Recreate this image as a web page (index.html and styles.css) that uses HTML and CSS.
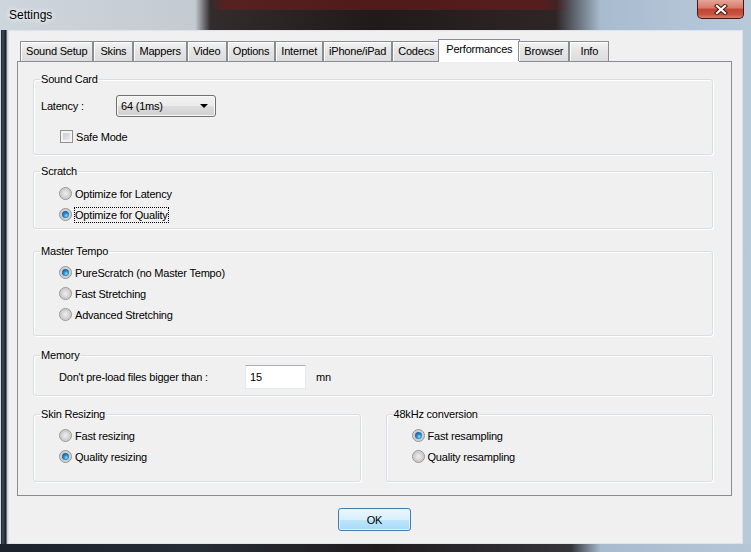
FILE: index.html
```html
<!DOCTYPE html>
<html lang="en">
<head>
    <meta charset="UTF-8">
    <title>Settings</title>
    <link rel="stylesheet" href="styles.css">
</head>
<body>
    <div class="window">
        <div class="titlebar">
            <div class="title">Settings</div>
            <div class="close">
                <svg width="14" height="11" viewBox="0 0 14 11">
                    <path d="M3 2 L11 9 M11 2 L3 9" stroke="#4b1710" stroke-width="4.2" stroke-linecap="square"/>
                    <path d="M3 2 L11 9 M11 2 L3 9" stroke="#fff" stroke-width="2.2" stroke-linecap="square"/>
                </svg>
            </div>
        </div>

        <div class="client">
            <div class="tabs">
                <div class="tab">Sound Setup</div>
                <div class="tab">Skins</div>
                <div class="tab">Mappers</div>
                <div class="tab">Video</div>
                <div class="tab">Options</div>
                <div class="tab">Internet</div>
                <div class="tab">iPhone/iPad</div>
                <div class="tab">Codecs</div>
                <div class="tab active">Performances</div>
                <div class="tab">Browser</div>
                <div class="tab">Info</div>
            </div>

            <div class="panel">
                <fieldset class="group sound-card">
                    <legend>Sound Card</legend>
                    <div class="latency-row">
                        <span class="latency-label">Latency :</span>
                        <div class="select">
                            <span>64 (1ms)</span>
                            <span class="arrow"></span>
                        </div>
                    </div>
                    <div class="check-row">
                        <span class="check"></span>
                        <span>Safe Mode</span>
                    </div>
                </fieldset>

                <fieldset class="group scratch">
                    <legend>Scratch</legend>
                    <div class="options">
                        <div class="option"><span class="radio"></span><span>Optimize for Latency</span></div>
                        <div class="option"><span class="radio on"></span><span class="focus">Optimize for Quality</span></div>
                    </div>
                </fieldset>

                <fieldset class="group tempo">
                    <legend>Master Tempo</legend>
                    <div class="options">
                        <div class="option"><span class="radio on"></span><span>PureScratch (no Master Tempo)</span></div>
                        <div class="option"><span class="radio"></span><span>Fast Stretching</span></div>
                        <div class="option"><span class="radio"></span><span>Advanced Stretching</span></div>
                    </div>
                </fieldset>

                <fieldset class="group memory">
                    <legend>Memory</legend>
                    <div class="memory-row">
                        <span class="memory-label">Don't pre-load files bigger than :</span>
                        <div class="field">15</div>
                        <span class="unit">mn</span>
                    </div>
                </fieldset>

                <div class="split">
                    <fieldset class="group half">
                        <legend>Skin Resizing</legend>
                        <div class="options">
                            <div class="option"><span class="radio"></span><span>Fast resizing</span></div>
                            <div class="option"><span class="radio on"></span><span>Quality resizing</span></div>
                        </div>
                    </fieldset>
                    <fieldset class="group half">
                        <legend>48kHz conversion</legend>
                        <div class="options">
                            <div class="option"><span class="radio on"></span><span>Fast resampling</span></div>
                            <div class="option"><span class="radio"></span><span>Quality resampling</span></div>
                        </div>
                    </fieldset>
                </div>
            </div>

            <div class="footer">
                <div class="button">OK</div>
            </div>
        </div>
    </div>
</body>
</html>
```

FILE: styles.css
```css
body {
    margin: 0;
    font-family: "Liberation Sans", Arial, sans-serif;
    font-size: 11px;
    letter-spacing: -0.2px;
    color: #000;
    overflow: hidden;
}
.window {
    width: 751px;
    height: 552px;
    display: flex;
    flex-direction: column;
    box-sizing: border-box;
    background:
        linear-gradient(to right, #1c222b 0%, #262c35 26%, #201c1e 50%, #34343a 76%, #a8bbce 80%, #b5c6d7 100%) bottom / 100% 8px no-repeat,
        linear-gradient(to right, #cfd6dc 0, #cfd6dc 1px, #1b2430 1px, #3d4b5b 3px, #111820 6px, #c7cfd7 7px, #c7cfd7 8px) 0 30px / 8px 100% no-repeat,
        linear-gradient(to right, #cdd5dd 0%, #c3cad2 26%, #332c2d 28%, #201a1b 50%, #2e2526 74%, #7d8a98 78%, #a9bccf 80%, #b8c9da 100%);
}
.titlebar {
    height: 30px;
    display: flex;
    justify-content: space-between;
    align-items: flex-start;
    background: linear-gradient(to right, transparent 28%, rgba(120, 25, 25, 0.55) 30%, rgba(120, 25, 25, 0.55) 72%, transparent 76%) top / 100% 10px no-repeat;
}
.title {
    padding: 8px 0 0 9px;
    font-size: 12px;
    line-height: 14px;
    letter-spacing: 0;
    text-shadow: 0 0 6px #fff, 0 0 6px #fff;
}
.close {
    width: 47px;
    height: 19px;
    margin-right: 7px;
    box-sizing: border-box;
    border: 1px solid #4a1512;
    border-top: 0;
    border-radius: 0 0 5px 5px;
    background: linear-gradient(#e6a596 0%, #d6796a 45%, #c24535 50%, #c6533f 80%, #d9806a 100%);
    display: flex;
    align-items: center;
    justify-content: center;
}

.client {
    flex: 1;
    margin: 0 8px 8px 8px;
    background: #f0f0f0;
    border: 1px solid #dde3e9;
    display: flex;
    flex-direction: column;
    padding: 8px 10px 0 8px;
}
.tabs {
    display: flex;
    align-items: flex-end;
    height: 23px;
    margin: 0 0 -1px 3px;
    position: relative;
    z-index: 1;
}
.tab {
    min-width: 40px;
    height: 20px;
    line-height: 19px;
    padding: 0 5px;
    margin: 0 0 1px 0;
    box-sizing: border-box;
    text-align: center;
    border: 1px solid #898c95;
    border-bottom: 0;
    background: linear-gradient(#f3f3f3, #e4e4e4 50%, #dcdcdc);
    box-shadow: inset 1px 1px 0 #fff;
    white-space: nowrap;
}
.tab.active {
    height: 23px;
    line-height: 19px;
    margin: 0 -2px 0 -2px;
    padding: 0 7px;
    background: #fff;
    box-shadow: none;
}

.panel {
    flex: 1;
    border: 1px solid #898c95;
    background: #f0f0f0;
    padding: 11px 18px 0 15px;
    display: flex;
    flex-direction: column;
}
.group {
    margin: 0;
    padding: 0 8px 0 6px;
    border: 1px solid #d5dfe5;
    border-radius: 3px;
    box-shadow: inset 1px 1px 0 #fff, 1px 1px 0 #fff;
    box-sizing: border-box;
    min-width: 0;
}
.group legend {
    padding: 0 1px;
    line-height: 13px;
}
.sound-card {
    height: 82px;
}
.scratch {
    height: 64px;
    margin-top: 10px;
}
.tempo {
    height: 91px;
    margin-top: 16px;
}
.memory {
    height: 47px;
    margin-top: 13px;
}
.split {
    display: flex;
    gap: 25px;
    height: 74px;
    margin-top: 12px;
}
.half {
    flex: 1;
}

.latency-row {
    display: flex;
    align-items: center;
    margin-top: 9px;
}
.latency-label {
    width: 75px;
    padding-left: 1px;
}
.select {
    width: 100px;
    height: 22px;
    box-sizing: border-box;
    border: 1px solid #707070;
    border-radius: 3px;
    background: linear-gradient(#f2f2f2 0%, #ebebeb 50%, #dddddd 51%, #cfcfcf 100%);
    box-shadow: inset 0 0 0 1px #f8f8f8;
    display: flex;
    align-items: center;
    justify-content: space-between;
    padding: 0 7px 0 4px;
}
.arrow {
    width: 0;
    height: 0;
    border-left: 4px solid transparent;
    border-right: 4px solid transparent;
    border-top: 4px solid #000;
}
.check-row {
    display: flex;
    align-items: center;
    gap: 3px;
    margin: 13px 0 0 20px;
}
.check {
    width: 13px;
    height: 13px;
    box-sizing: border-box;
    border: 1px solid #8f8f8f;
    background: linear-gradient(135deg, #c3c7cc, #eff0f1);
    box-shadow: inset 0 0 0 2px #f4f4f4;
}

.options {
    padding-top: 5px;
    margin-left: 19px;
}
.tempo .options,
.half .options {
    padding-top: 4px;
}
.option {
    display: flex;
    align-items: center;
    gap: 3px;
    height: 21px;
}
.radio {
    width: 13px;
    height: 13px;
    box-sizing: border-box;
    border-radius: 50%;
    border: 1px solid #939393;
    background: radial-gradient(circle at 50% 50%, #eeeeee 0, #dadada 40%, #c8c8c8 62%, #f8f8f8 80%);
    display: flex;
    align-items: center;
    justify-content: center;
}
.radio.on::after {
    content: "";
    width: 7px;
    height: 7px;
    border-radius: 50%;
    background: radial-gradient(circle at 60% 65%, #8fdcfb 0, #2a8fd0 35%, #0b3e73 100%);
}
.focus {
    outline: 1px dotted #000;
    outline-offset: 0;
    padding: 1px 0;
}

.memory-row {
    display: flex;
    align-items: center;
    margin: 3px 0 0 19px;
}
.memory-label {
    width: 186px;
}
.field {
    width: 61px;
    height: 24px;
    box-sizing: border-box;
    border: 1px solid #e3e9ef;
    border-top-color: #abadb3;
    background: #fff;
    line-height: 22px;
    padding-left: 4px;
}
.unit {
    margin-left: 10px;
}

.footer {
    height: 47px;
    display: flex;
    align-items: center;
    justify-content: center;
}
.button {
    width: 73px;
    height: 23px;
    box-sizing: border-box;
    border: 1px solid #3c7fb1;
    border-radius: 3px;
    background: linear-gradient(#eaf6fd 0%, #d9f0fc 50%, #bee6fd 51%, #a7d9f5 100%);
    box-shadow: inset 0 0 0 1px #e4f4fc;
    display: flex;
    align-items: center;
    justify-content: center;
}
```
